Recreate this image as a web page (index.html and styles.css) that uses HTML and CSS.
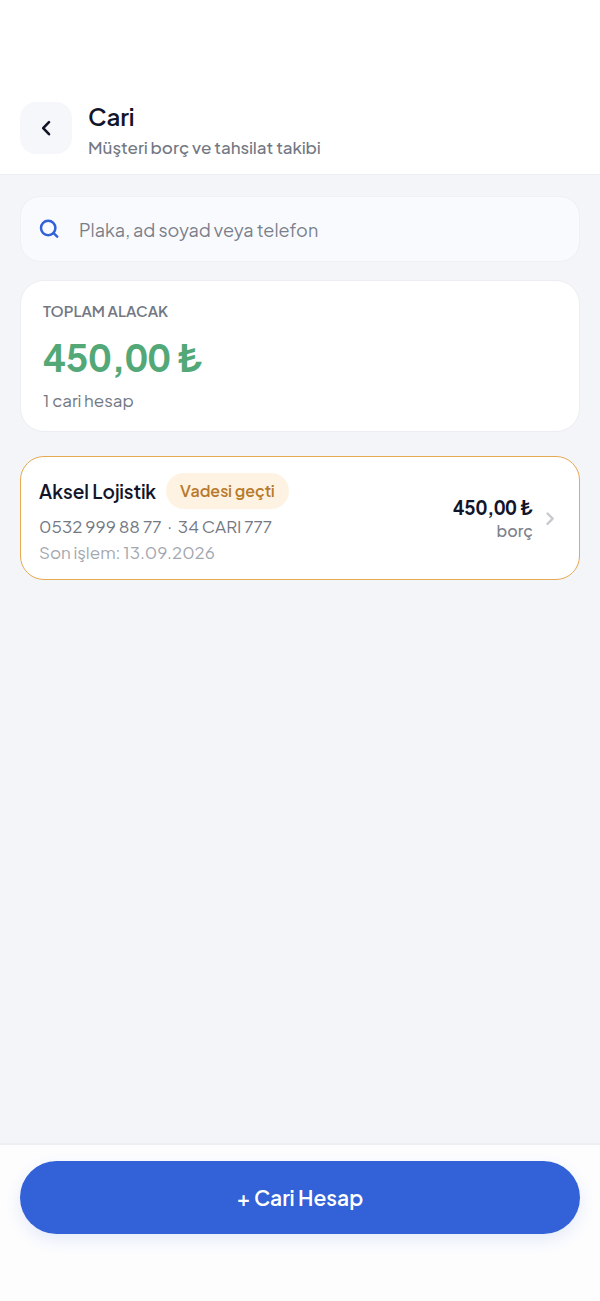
FILE: index.html
```html
<!DOCTYPE html>
<html lang="tr">
<head>
    <meta charset="UTF-8">
    <meta name="viewport" content="width=device-width, initial-scale=1.0">
    <title>Cari</title>
    <link rel="stylesheet" href="styles.css">
</head>
<body>
    <header class="header">
        <button type="button" class="back" aria-label="Geri">
            <svg width="24" height="24" viewBox="0 0 24 24" fill="none" stroke="currentColor" stroke-width="2.6" stroke-linecap="round" stroke-linejoin="round"><path d="M15 6.2 9.2 12.2l5.8 6"/></svg>
        </button>
        <div class="heading">
            <h1>Cari</h1>
            <p>Müşteri borç ve tahsilat takibi</p>
        </div>
    </header>

    <main class="content">
        <label class="search">
            <svg width="22" height="22" viewBox="0 0 22 22" fill="none" stroke="currentColor" stroke-width="2.5" stroke-linecap="round"><circle cx="9.2" cy="10" r="7.2"/><path d="m14.6 15.2 3.6 3.4"/></svg>
            <input type="search" placeholder="Plaka, ad soyad veya telefon" aria-label="Cari ara">
        </label>

        <section class="summary">
            <h2>TOPLAM ALACAK</h2>
            <p class="total">450,00 ₺</p>
            <p class="count">1 cari hesap</p>
        </section>

        <a class="account" href="#">
            <div class="info">
                <div class="name-row">
                    <span class="name">Aksel Lojistik</span>
                    <span class="badge">Vadesi geçti</span>
                </div>
                <span class="contact">0532 999 88 77 &nbsp;·&nbsp; 34 CARI 777</span>
                <span class="last">Son işlem: 13.09.2026</span>
            </div>
            <div class="debt">
                <span class="amount">450,00 ₺</span>
                <span class="kind">borç</span>
            </div>
            <svg class="chevron" width="10" height="16" viewBox="0 0 10 16" fill="none" stroke="currentColor" stroke-width="2.4" stroke-linecap="round" stroke-linejoin="round"><path d="m2.5 2.5 5.2 5.2-5.2 5.2"/></svg>
        </a>
    </main>

    <footer class="footer">
        <button type="button" class="add">+ Cari Hesap</button>
    </footer>
</body>
</html>
```

FILE: styles.css
```css
* {
    box-sizing: border-box;
}
body {
    margin: 0;
    min-height: 100vh;
    display: flex;
    flex-direction: column;
    font-family: "Plus Jakarta Sans", Inter, sans-serif;
    font-size: 17px;
    line-height: 24px;
    color: #12152a;
    background: #f3f5f9;
}
h1, h2, p {
    margin: 0;
}
button, input {
    font: inherit;
}
.header {
    display: flex;
    align-items: flex-start;
    gap: 16px;
    padding: 102px 20px 14px;
    background: #fff;
    border-bottom: 1px solid #eceef2;
}
.back {
    display: flex;
    align-items: center;
    justify-content: center;
    width: 52px;
    height: 52px;
    padding: 0;
    border: none;
    border-radius: 16px;
    background: #f5f7fb;
    color: #12152a;
}
.heading h1 {
    font-size: 24px;
    line-height: 28px;
    font-weight: 600;
}
.heading p {
    padding-top: 4px;
    line-height: 26px;
    font-weight: 500;
    color: #737883;
}
.content {
    flex: 1;
    display: flex;
    flex-direction: column;
    padding: 21px 20px;
}
.search {
    display: flex;
    align-items: center;
    gap: 18px;
    height: 66px;
    padding: 0 18px;
    border: 1px solid #edf0f5;
    border-radius: 20px;
    background: #f9fafe;
    color: #3361d8;
}
.search input {
    flex: 1;
    min-width: 0;
    padding: 2px 0 0;
    border: none;
    outline: none;
    background: none;
    font-size: 18px;
    color: #12152a;
}
.search input::placeholder {
    color: #7a7f89;
    opacity: 1;
}
.summary {
    margin-top: 18px;
    padding: 18px 22px;
    border: 1px solid #eceef3;
    border-radius: 24px;
    background: #fff;
    color: #737883;
}
.summary h2 {
    font-size: 15px;
    line-height: 24px;
    font-weight: 600;
}
.total {
    margin: 11px 0 8px;
    font-size: 38px;
    line-height: 46px;
    font-weight: 700;
    font-variant-numeric: tabular-nums;
    color: #53a878;
}
.count {
    padding-bottom: 1px;
}
.account {
    display: flex;
    align-items: center;
    gap: 12px;
    margin-top: 24px;
    padding: 16px 24px 14px 18px;
    border: 1px solid #e5a952;
    border-radius: 24px;
    background: #fff;
    color: inherit;
    text-decoration: none;
}
.info {
    flex: 1;
    display: flex;
    flex-direction: column;
}
.name-row {
    display: flex;
    align-items: center;
    gap: 10px;
    margin-bottom: 4px;
}
.name {
    font-size: 19px;
    font-weight: 600;
}
.badge {
    padding: 6px 14px;
    border-radius: 18px;
    background: #fef3e3;
    font-size: 16px;
    font-weight: 600;
    color: #b87a2c;
}
.contact, .last {
    line-height: 26px;
}
.contact {
    color: #737883;
}
.last {
    color: #a3a7af;
}
.debt {
    display: flex;
    flex-direction: column;
    align-items: flex-end;
}
.amount {
    font-size: 19px;
    font-weight: 700;
    font-variant-numeric: tabular-nums;
}
.kind {
    font-size: 16px;
    font-weight: 500;
    color: #7d818b;
}
.chevron {
    color: #c8cacf;
}
.footer {
    padding: 16px 20px 67px;
    border-top: 2px solid #eceef2;
    background: #fdfdfe;
}
.add {
    display: block;
    width: 100%;
    height: 73px;
    border: none;
    border-radius: 37px;
    background: #3361d8;
    box-shadow: 0 6px 16px rgba(51, 97, 216, 0.12);
    font-size: 21px;
    font-weight: 600;
    color: #fff;
}
```
